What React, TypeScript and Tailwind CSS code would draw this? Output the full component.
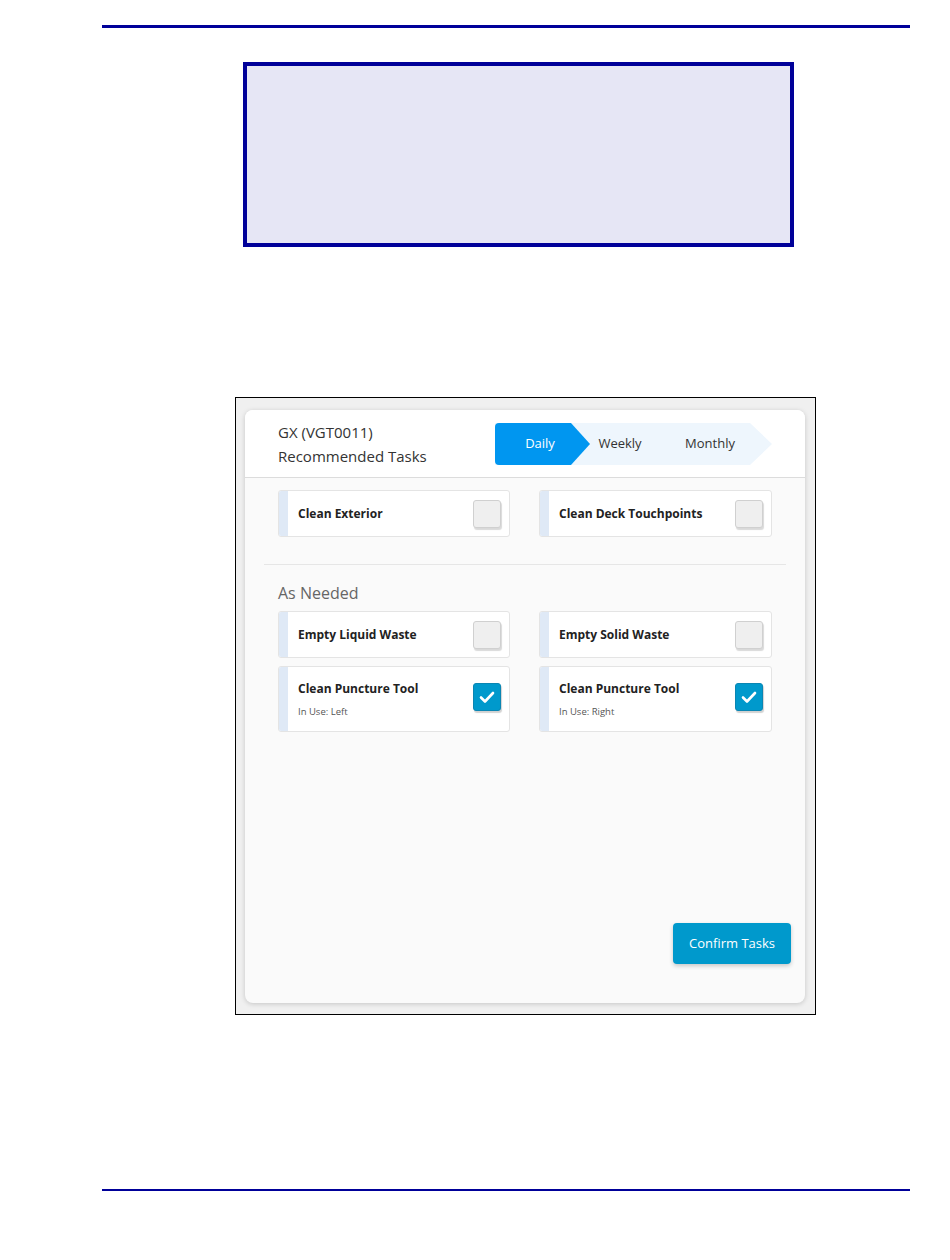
import React from "react"

type Task = { label: string; sub?: string; done?: boolean }

const daily: Task[] = [
  { label: "Clean Exterior" },
  { label: "Clean Deck Touchpoints" },
]

const asNeeded: Task[] = [
  { label: "Empty Liquid Waste" },
  { label: "Empty Solid Waste" },
  { label: "Clean Puncture Tool", sub: "In Use: Left", done: true },
  { label: "Clean Puncture Tool", sub: "In Use: Right", done: true },
]

function Checkbox({ checked }: { checked?: boolean }) {
  if (checked) {
    return (
      <div className="flex h-[28px] w-[28px] shrink-0 items-center justify-center rounded-[3px] border border-[#0a86b3] bg-[#0099cc] shadow-[1px_2px_1px_rgba(0,0,0,0.18)]">
        <svg width="16" height="14" viewBox="0 0 16 14" fill="none">
          <path d="M2 7.5l4 4L14 3" stroke="white" strokeWidth="2.6" strokeLinecap="round" strokeLinejoin="round" />
        </svg>
      </div>
    )
  }
  return (
    <div className="h-[28px] w-[28px] shrink-0 rounded-[3px] border border-[#d0d0d0] bg-[#efefef] shadow-[1px_2px_1px_rgba(0,0,0,0.15)]" />
  )
}

function TaskCard({ task }: { task: Task }) {
  return (
    <div className="flex overflow-hidden rounded-[3px] border border-[#e4e4e4] bg-white">
      {/* accent stripe */}
      <div className="w-[9px] shrink-0 bg-[#dfe9f6]" />
      <div
        className={
          task.sub
            ? "flex flex-1 items-center justify-between pb-[13px] pl-[10px] pr-[8px] pt-[14px]"
            : "flex h-[45px] flex-1 items-center justify-between pl-[10px] pr-[8px]"
        }
      >
        <div>
          <p className="text-[12px] font-bold leading-[16px] text-[#222]">{task.label}</p>
          {task.sub && <p className="mt-[9px] text-[9.5px] leading-[12px] text-[#555]">{task.sub}</p>}
        </div>
        <div className={task.sub ? "-mt-[6px]" : ""}>
          <Checkbox checked={task.done} />
        </div>
      </div>
    </div>
  )
}

function Tabs() {
  return (
    <div className="relative h-[42px] w-[277px]">
      <svg className="absolute inset-0" width="277" height="42" viewBox="0 0 277 42">
        <polygon points="0,0 255,0 277,21 255,42 0,42" fill="#eef6fd" />
        <path d="M4,0 H76 L95,21 L76,42 H4 Q0,42 0,38 V4 Q0,0 4,0 Z" fill="#0096f0" />
      </svg>
      <div className="relative flex h-full items-center text-[13px]">
        <span className="w-[90px] text-center text-white">Daily</span>
        <span className="w-[70px] text-center text-[#333]">Weekly</span>
        <span className="w-[110px] text-center text-[#333]">Monthly</span>
      </div>
    </div>
  )
}

export default function App() {
  return (
    <div className="min-h-[1260px] w-[950px] bg-white font-['Open_Sans','Noto_Sans',sans-serif]">
      {/* header rule */}
      <div className="pl-[102px] pr-[40px] pt-[25px]">
        <div className="h-[3px] bg-[#000099]" />
      </div>

      {/* note box */}
      <div className="ml-[243px] mt-[34px] h-[185px] w-[551px] border-4 border-[#000099] bg-[#e6e6f5]" />

      {/* screenshot frame */}
      <div className="ml-[235px] mt-[150px] h-[618px] w-[581px] border border-black bg-[#f0f0f0] pl-[9px] pt-[12px]">
        <div className="flex h-[593px] w-[560px] flex-col overflow-hidden rounded-lg bg-[#fafafa] shadow-[0_1px_5px_rgba(0,0,0,0.18)]">
          {/* card header */}
          <div className="flex h-[68px] shrink-0 items-center justify-between border-b border-[#dcdcdc] bg-white pl-[33px] pr-[33px]">
            <div className="text-[15px] leading-[24px] text-[#333]">
              <p>GX (VGT0011)</p>
              <p>Recommended Tasks</p>
            </div>
            <Tabs />
          </div>

          {/* body */}
          <div className="flex flex-1 flex-col pb-[39px] pt-[12px]">
            <div className="grid grid-cols-[232px_233px] gap-x-[29px] px-[33px]">
              {daily.map((t) => (
                <TaskCard key={t.label} task={t} />
              ))}
            </div>

            <div className="mx-[19px] mt-[27px] h-px bg-[#e6e6e6]" />

            <p className="ml-[33px] mt-[17px] text-[16px] leading-[22px] text-[#666]">As Needed</p>

            <div className="mt-[7px] grid grid-cols-[232px_233px] gap-x-[29px] gap-y-[8px] px-[33px]">
              {asNeeded.map((t, i) => (
                <TaskCard key={i} task={t} />
              ))}
            </div>

            <div className="mt-auto flex justify-end pr-[14px]">
              <button className="h-[41px] w-[118px] rounded-[4px] bg-[#0099cc] text-[13px] text-white shadow-[0_2px_4px_rgba(0,0,0,0.2)]">
                Confirm Tasks
              </button>
            </div>
          </div>
        </div>
      </div>

      {/* footer rule */}
      <div className="pl-[102px] pr-[40px] pt-[174px]">
        <div className="h-[2px] bg-[#000099]" />
      </div>
    </div>
  )
}
